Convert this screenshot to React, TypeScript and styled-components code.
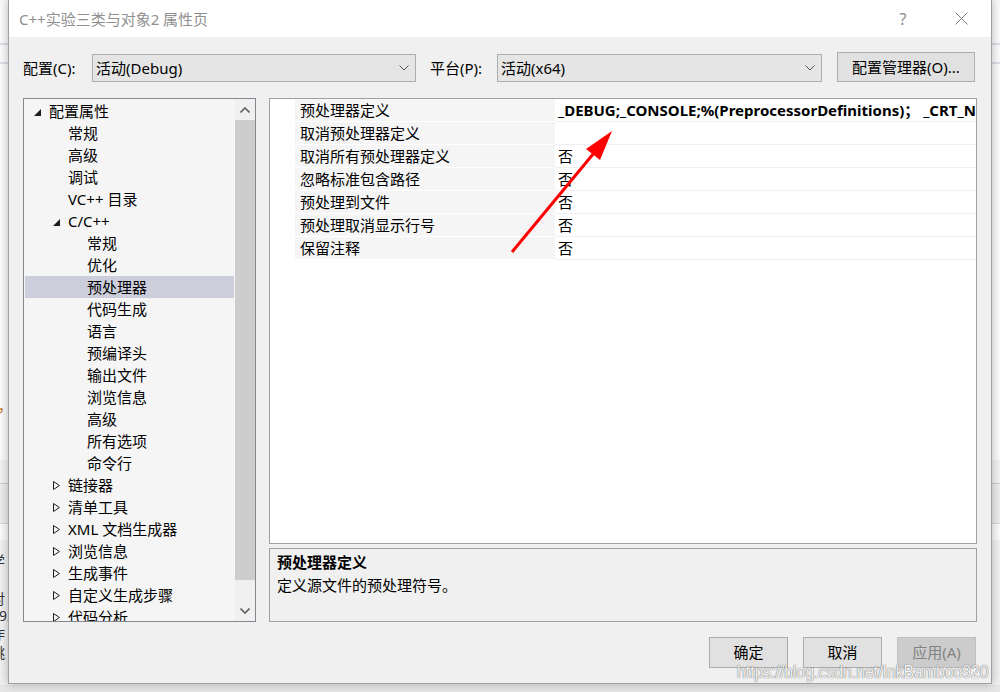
import React from "react";
import styled, { createGlobalStyle } from "styled-components";

const GlobalStyle = createGlobalStyle`
  html, body { margin: 0; padding: 0; }
  body {
    width: 1000px; height: 692px; overflow: hidden; background: #fafafa;
    font-family: "Noto Sans", "Noto Sans CJK SC", sans-serif;
  }
  #root { width: 1000px; height: 692px; }
`;

const FONT = `"Noto Sans", "Noto Sans CJK SC", sans-serif`;

const Desktop = styled.div`
  position: relative;
  width: 1000px;
  height: 692px;
  overflow: hidden;
  background: #fafafa;
`;

/* ---------- things of the window behind the dialog ---------- */
const BackLine = styled.div<{ $top: number; $color?: string; $h?: number }>`
  position: absolute;
  left: 0;
  right: 0;
  top: ${(p) => p.$top}px;
  height: ${(p) => p.$h ?? 2}px;
  background: ${(p) => p.$color ?? "#dedee6"};
`;

const BackText = styled.div<{ $top: number; $color?: string }>`
  position: absolute;
  left: -9px;
  top: ${(p) => p.$top}px;
  font: 14px/15px ${FONT};
  color: ${(p) => p.$color ?? "#333"};
  white-space: nowrap;
`;

/* ---------- dialog ---------- */
const Dialog = styled.div`
  position: absolute;
  left: 8px;
  top: -1px;
  width: 984px;
  height: 685px;
  box-sizing: border-box;
  border: 1px solid #a0a0a0;
  background: #f0f0f0;
  box-shadow: 0 0 9px rgba(0, 0, 0, 0.28);
  display: flex;
  flex-direction: column;
  font-family: ${FONT};
  font-size: 15px;
  color: #000;
`;

const TitleBar = styled.div`
  height: 37px;
  flex: none;
  background: #fff;
  display: flex;
  align-items: center;
  padding-left: 10px;
  padding-right: 1px;
`;

const TitleText = styled.div`
  flex: 1;
  color: #8f8f8f;
  font-size: 15px;
  line-height: 20px;
  padding-top: 1px;
`;

const TitleButton = styled.div`
  width: 58px;
  height: 37px;
  display: flex;
  align-items: center;
  justify-content: center;
  color: #8a8a8a;
  font-size: 16px;
`;

const Body = styled.div`
  flex: 1;
  display: flex;
  flex-direction: column;
  padding: 15px 14px 15px 14px;
  min-height: 0;
`;

const ConfigRow = styled.div`
  display: flex;
  align-items: flex-end;
  height: 30px;
`;

const FieldLabel = styled.div<{ $w: number; $gap?: number }>`
  width: ${(p) => p.$w}px;
  margin-left: ${(p) => p.$gap ?? 0}px;
  height: 28px;
  line-height: 28px;
  white-space: nowrap;
`;

const Combo = styled.div<{ $w: number }>`
  width: ${(p) => p.$w}px;
  height: 28px;
  box-sizing: border-box;
  border: 1px solid #adadad;
  background: #e5e5e5;
  display: flex;
  align-items: center;
  padding: 0 6px 0 3px;
  line-height: 26px;
`;

const ComboText = styled.div`
  flex: 1;
  white-space: nowrap;
`;

const PushButton = styled.button<{ $w: number; $h: number; $gap?: number; $disabled?: boolean }>`
  width: ${(p) => p.$w}px;
  height: ${(p) => p.$h}px;
  margin-left: ${(p) => p.$gap ?? 0}px;
  box-sizing: border-box;
  border: 1px solid ${(p) => (p.$disabled ? "#bfbfbf" : "#adadad")};
  background: ${(p) => (p.$disabled ? "#cccccc" : "#e1e1e1")};
  color: ${(p) => (p.$disabled ? "#838383" : "#000")};
  font-family: ${FONT};
  font-size: 15px;
  padding: 0;
  line-height: ${(p) => p.$h - 2}px;
  white-space: nowrap;
`;

const Main = styled.div`
  margin-top: 16px;
  height: 524px;
  display: flex;
  gap: 13px;
`;

const Tree = styled.div`
  width: 233px;
  box-sizing: border-box;
  border: 1px solid #828790;
  background: #f5f5f5;
  display: flex;
  overflow: hidden;
`;

const TreeList = styled.div`
  flex: 1;
  padding: 1px 1px 0 1px;
  overflow: hidden;
`;

const TreeRow = styled.div<{ $level: number; $selected?: boolean }>`
  height: 22px;
  display: flex;
  align-items: center;
  padding-left: ${(p) => 9 + p.$level * 19}px;
  background: ${(p) => (p.$selected ? "#cccedb" : "transparent")};
  white-space: nowrap;
  line-height: 22px;
`;

const Expander = styled.div`
  width: 15px;
  height: 22px;
  flex: none;
  display: flex;
  align-items: center;
`;

const ScrollBar = styled.div`
  width: 20px;
  flex: none;
  background: #f0f0f0;
  display: flex;
  flex-direction: column;
`;

const ScrollArrow = styled.div`
  height: 21px;
  flex: none;
  display: flex;
  align-items: center;
  justify-content: center;
`;

const ScrollThumb = styled.div`
  height: 460px;
  flex: none;
  background: #cdcdcd;
`;

const ScrollTrack = styled.div`
  flex: 1;
`;

const RightCol = styled.div`
  flex: 1;
  display: flex;
  flex-direction: column;
  gap: 4px;
  min-width: 0;
`;

const Grid = styled.div`
  height: 446px;
  box-sizing: border-box;
  border: 1px solid #a0a0a0;
  background: #fff;
  overflow: hidden;
`;

const PropRow = styled.div`
  display: grid;
  grid-template-columns: 25px 260px 1fr;
  height: 23px;
`;

const Strip = styled.div`
  background: #fff;
`;

const PropName = styled.div`
  background: #f5f5f5;
  border-bottom: 1px solid #ffffff;
  padding-left: 5px;
  line-height: 22px;
  white-space: nowrap;
`;

const PropValue = styled.div<{ $bold?: boolean }>`
  border-bottom: 1px solid #f0f0f3;
  padding-left: 3px;
  line-height: 22px;
  white-space: nowrap;
  overflow: hidden;
  font-weight: ${(p) => (p.$bold ? 700 : 400)};
`;

const Desc = styled.div`
  height: 74px;
  box-sizing: border-box;
  border: 1px solid #a0a0a0;
  background: #f0f0f0;
  padding: 2px 7px;
  line-height: 23px;
`;

const DescTitle = styled.div`
  font-weight: 700;
`;

const Footer = styled.div`
  margin-top: 15px;
  display: flex;
  justify-content: flex-end;
  gap: 15px;
  padding-right: 1px;
`;

const Overlay = styled.svg`
  position: absolute;
  left: 0;
  top: 0;
  pointer-events: none;
`;

const Watermark = styled.div`
  position: absolute;
  left: 737px;
  top: 660px;
  font: 19px/24px "Liberation Sans", sans-serif;
  color: rgba(255, 255, 255, 0.92);
  text-shadow: 0 0 1px rgba(110, 110, 110, 0.95), 0 0 1px rgba(110, 110, 110, 0.95);
  white-space: nowrap;
  transform: scaleX(0.83);
  transform-origin: left center;
`;

const ChevronDown = () => (
  <svg width="10" height="6" viewBox="0 0 10 6">
    <polyline points="0.5,0.5 5,5 9.5,0.5" fill="none" stroke="#555" strokeWidth="1" />
  </svg>
);

const OpenTri = () => (
  <svg width="7" height="7" viewBox="0 0 7 7" style={{ marginTop: 2 }}>
    <polygon points="7,0 7,7 0,7" fill="#1e1e1e" />
  </svg>
);

const ClosedTri = () => (
  <svg width="7" height="9" viewBox="0 0 7 9">
    <polygon points="0.5,0.5 6.5,4.5 0.5,8.5" fill="none" stroke="#1e1e1e" strokeWidth="1" />
  </svg>
);

type Item = { label: string; level: number; exp?: "open" | "closed"; selected?: boolean };

const treeItems: Item[] = [
  { label: "配置属性", level: 0, exp: "open" },
  { label: "常规", level: 1 },
  { label: "高级", level: 1 },
  { label: "调试", level: 1 },
  { label: "VC++ 目录", level: 1 },
  { label: "C/C++", level: 1, exp: "open" },
  { label: "常规", level: 2 },
  { label: "优化", level: 2 },
  { label: "预处理器", level: 2, selected: true },
  { label: "代码生成", level: 2 },
  { label: "语言", level: 2 },
  { label: "预编译头", level: 2 },
  { label: "输出文件", level: 2 },
  { label: "浏览信息", level: 2 },
  { label: "高级", level: 2 },
  { label: "所有选项", level: 2 },
  { label: "命令行", level: 2 },
  { label: "链接器", level: 1, exp: "closed" },
  { label: "清单工具", level: 1, exp: "closed" },
  { label: "XML 文档生成器", level: 1, exp: "closed" },
  { label: "浏览信息", level: 1, exp: "closed" },
  { label: "生成事件", level: 1, exp: "closed" },
  { label: "自定义生成步骤", level: 1, exp: "closed" },
  { label: "代码分析", level: 1, exp: "closed" },
];

const props: { name: string; value: string; bold?: boolean }[] = [
  {
    name: "预处理器定义",
    value: "_DEBUG;_CONSOLE;%(PreprocessorDefinitions)； _CRT_NONSTDC_NO_DEPRECATE",
    bold: true,
  },
  { name: "取消预处理器定义", value: "" },
  { name: "取消所有预处理器定义", value: "否" },
  { name: "忽略标准包含路径", value: "否" },
  { name: "预处理到文件", value: "否" },
  { name: "预处理取消显示行号", value: "否" },
  { name: "保留注释", value: "否" },
];

export default function App() {
  return (
    <Desktop>
      <GlobalStyle />
      <BackLine $top={43} />
      <BackLine $top={62} />
      <BackLine $top={460} $h={23} $color="#f2f2f2" />
      <BackLine $top={483} $h={1} $color="#cfcfcf" />
      <BackLine $top={484} $h={39} $color="#ececec" />
      <BackLine $top={523} $h={1} $color="#d8d8d8" />
      <BackLine $top={540} $h={145} $color="#f0f0f0" />
      <BackLine $top={685} $h={7} $color="#e6e6e6" />
      <BackText $top={398} $color="#c07020">，，</BackText>
      <BackText $top={553}>学 :</BackText>
      <BackText $top={591}>对</BackText>
      <BackText $top={608}>092</BackText>
      <BackText $top={626}>作</BackText>
      <BackText $top={645}>跳</BackText>

      <Dialog>
        <TitleBar>
          <TitleText>C++实验三类与对象2 属性页</TitleText>
          <TitleButton>?</TitleButton>
          <TitleButton>
            <svg width="13" height="13" viewBox="0 0 13 13">
              <line x1="0.5" y1="0.5" x2="12.5" y2="12.5" stroke="#7a7a7a" strokeWidth="1" />
              <line x1="12.5" y1="0.5" x2="0.5" y2="12.5" stroke="#7a7a7a" strokeWidth="1" />
            </svg>
          </TitleButton>
        </TitleBar>

        <Body>
          <ConfigRow>
            <FieldLabel $w={69}>配置(C):</FieldLabel>
            <Combo $w={324}>
              <ComboText>活动(Debug)</ComboText>
              <ChevronDown />
            </Combo>
            <FieldLabel $w={67} $gap={14}>平台(P):</FieldLabel>
            <Combo $w={325}>
              <ComboText>活动(x64)</ComboText>
              <ChevronDown />
            </Combo>
            <PushButton $w={138} $h={30} $gap={15}>配置管理器(O)...</PushButton>
          </ConfigRow>

          <Main>
            <Tree>
              <TreeList>
                {treeItems.map((it, i) => (
                  <TreeRow key={i} $level={it.level} $selected={it.selected}>
                    <Expander>
                      {it.exp === "open" && <OpenTri />}
                      {it.exp === "closed" && <ClosedTri />}
                    </Expander>
                    {it.label}
                  </TreeRow>
                ))}
              </TreeList>
              <ScrollBar>
                <ScrollArrow>
                  <svg width="10" height="6" viewBox="0 0 10 6">
                    <polyline points="0.5,5.5 5,1 9.5,5.5" fill="none" stroke="#606060" strokeWidth="1.6" />
                  </svg>
                </ScrollArrow>
                <ScrollThumb />
                <ScrollTrack />
                <ScrollArrow>
                  <svg width="10" height="6" viewBox="0 0 10 6">
                    <polyline points="0.5,0.5 5,5 9.5,0.5" fill="none" stroke="#606060" strokeWidth="1.6" />
                  </svg>
                </ScrollArrow>
              </ScrollBar>
            </Tree>

            <RightCol>
              <Grid>
                {props.map((p, i) => (
                  <PropRow key={i}>
                    <Strip />
                    <PropName>{p.name}</PropName>
                    <PropValue $bold={p.bold}>{p.value}</PropValue>
                  </PropRow>
                ))}
              </Grid>
              <Desc>
                <DescTitle>预处理器定义</DescTitle>
                <div>定义源文件的预处理符号。</div>
              </Desc>
            </RightCol>
          </Main>

          <Footer>
            <PushButton $w={79} $h={31}>确定</PushButton>
            <PushButton $w={79} $h={31}>取消</PushButton>
            <PushButton $w={79} $h={31} $disabled>应用(A)</PushButton>
          </Footer>
        </Body>
      </Dialog>

      <Overlay width="1000" height="692" viewBox="0 0 1000 692">
        <line x1="512" y1="252" x2="594" y2="153" stroke="#ff0000" strokeWidth="3" />
        <polygon points="612,131 586,149 600,160" fill="#ff0000" />
      </Overlay>
      <Watermark>https://blog.csdn.net/InkBamboo920</Watermark>
    </Desktop>
  );
}
